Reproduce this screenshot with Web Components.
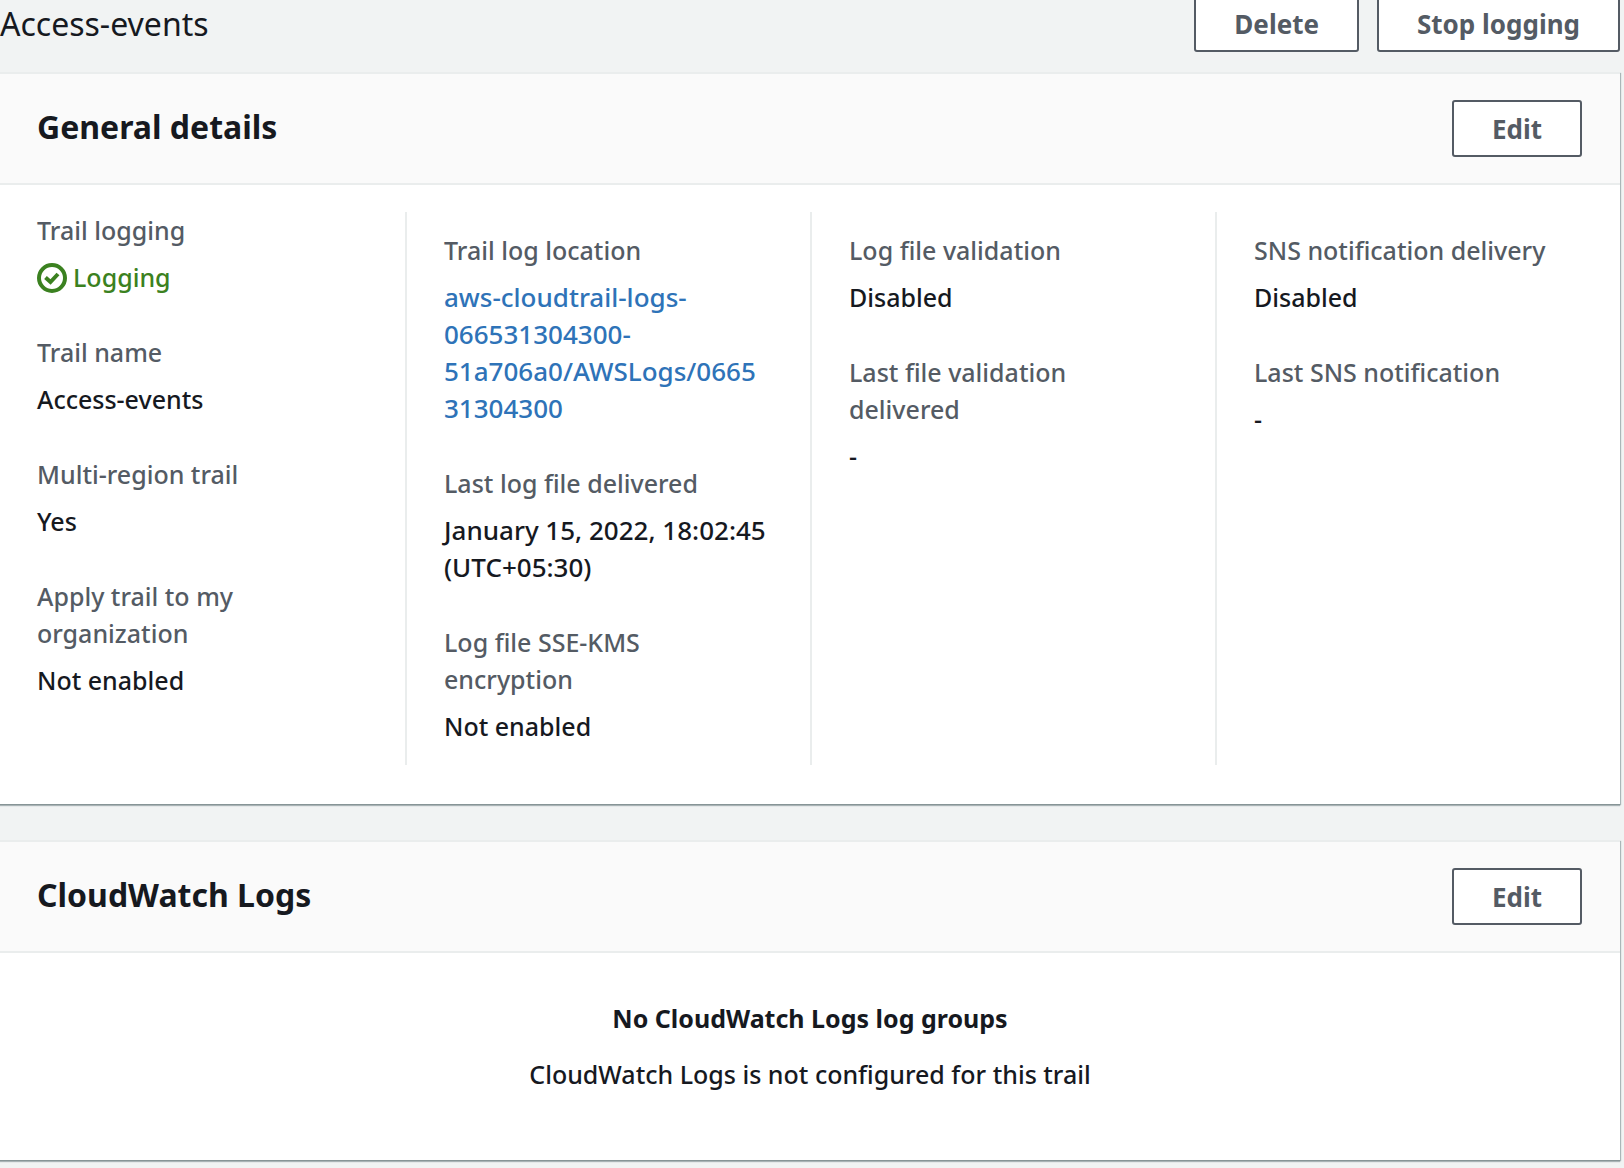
<!DOCTYPE html>
<html lang="en">
<head>
<meta charset="utf-8">
<meta name="viewport" content="width=device-width, initial-scale=1">
<title>Access-events</title>
<style>
  html { background: #f1f3f3; }
  body {
    margin: 0;
    font-family: "Noto Sans", "Open Sans", sans-serif;
    font-size: 25px;
    font-weight: 500;
    line-height: 37px;
    color: #16191f;
    --muted: #545b64;
    --link: #2e73b8;
    --ok: #3b8120;
    --rule: #eaeded;
    --text-long: 26px;
  }
</style>
</head>
<body>
<trail-page>
  <page-bar slot="bar" heading="Access-events">
    <action-button>Delete</action-button>
    <action-button>Stop logging</action-button>
  </page-bar>

  <detail-card heading="General details">
    <action-button slot="actions">Edit</action-button>
    <detail-columns>
      <detail-column lead>
        <key-value label="Trail logging"><status-ok>Logging</status-ok></key-value>
        <key-value label="Trail name">Access-events</key-value>
        <key-value label="Multi-region trail">Yes</key-value>
        <key-value label="Apply trail to my organization">Not enabled</key-value>
      </detail-column>
      <detail-column>
        <key-value label="Trail log location" long><text-link href="#log-location">aws-cloudtrail-logs-066531304300-51a706a0/AWSLogs/066531304300</text-link></key-value>
        <key-value label="Last log file delivered" long>January 15, 2022, 18:02:45 (UTC+05:30)</key-value>
        <key-value label="Log file SSE-KMS encryption">Not enabled</key-value>
      </detail-column>
      <detail-column>
        <key-value label="Log file validation">Disabled</key-value>
        <key-value label="Last file validation delivered">-</key-value>
      </detail-column>
      <detail-column>
        <key-value label="SNS notification delivery">Disabled</key-value>
        <key-value label="Last SNS notification">-</key-value>
      </detail-column>
    </detail-columns>
  </detail-card>

  <detail-card heading="CloudWatch Logs">
    <action-button slot="actions">Edit</action-button>
    <empty-state heading="No CloudWatch Logs log groups">CloudWatch Logs is not configured for this trail</empty-state>
  </detail-card>
</trail-page>

<script>
  class BaseElement extends HTMLElement {
    constructor() {
      super();
      this.attachShadow({ mode: "open" });
    }
    connectedCallback() {
      this.shadowRoot.innerHTML = this.render();
    }
  }

  customElements.define("trail-page", class extends BaseElement {
    render() {
      return `
        <style>
          :host { display: block; }
          main { display: flex; flex-direction: column; gap: 36px; padding: 0 4px 8px 0; }
        </style>
        <slot name="bar"></slot>
        <main><slot></slot></main>`;
    }
  });

  customElements.define("page-bar", class extends BaseElement {
    render() {
      return `
        <style>
          :host { display: block; }
          header {
            box-sizing: border-box; height: 72px; padding: 0 4px 20px 0;
            display: flex; align-items: flex-end; justify-content: space-between;
          }
          h1 { margin: 0; font-size: 32px; line-height: 57px; font-weight: 400; }
          .actions { display: flex; gap: 18px; }
        </style>
        <header>
          <h1>${this.getAttribute("heading")}</h1>
          <div class="actions"><slot></slot></div>
        </header>`;
    }
  });

  customElements.define("action-button", class extends BaseElement {
    render() {
      return `
        <style>
          :host { display: block; }
          button {
            display: block; margin: 0; padding: 9px 38px 7px;
            font: inherit; font-size: 26px; font-weight: 700; color: var(--muted);
            background: #fff; border: 2px solid var(--muted); border-radius: 3px;
            cursor: pointer; white-space: nowrap;
          }
          button:hover { background: #fafafa; color: #16191f; }
        </style>
        <button type="button"><slot></slot></button>`;
    }
  });

  customElements.define("detail-card", class extends BaseElement {
    render() {
      return `
        <style>
          :host { display: block; }
          section {
            background: #fff;
            border-top: 2px solid var(--rule);
            box-shadow: 0 1px 0 #879496, 0 2px 1px #a9b3b5, 1px 1px 1px #aab7b8;
          }
          header {
            display: flex; align-items: center; justify-content: space-between;
            padding: 26px 38px 26px 37px;
            background: #fafafa; border-bottom: 2px solid var(--rule);
          }
          h2 { margin: 0; padding-bottom: 4px; font-size: 32px; line-height: 37px; font-weight: 700; }
        </style>
        <section>
          <header>
            <h2>${this.getAttribute("heading")}</h2>
            <slot name="actions"></slot>
          </header>
          <slot></slot>
        </section>`;
    }
  });

  customElements.define("detail-columns", class extends BaseElement {
    render() {
      return `
        <style>
          :host { display: grid; grid-template-columns: repeat(4, minmax(0, 1fr)); padding: 27px 0 39px; }
        </style>
        <slot></slot>`;
    }
  });

  customElements.define("detail-column", class extends BaseElement {
    render() {
      return `
        <style>
          :host {
            display: flex; flex-direction: column; gap: 38px;
            padding: 20px 43px 20px 37px; border-left: 2px solid var(--rule);
          }
          :host([lead]) { padding-top: 0; border-left: 0; }
        </style>
        <slot></slot>`;
    }
  });

  customElements.define("key-value", class extends BaseElement {
    render() {
      return `
        <style>
          :host { display: block; }
          dl { margin: 0; display: flex; flex-direction: column; gap: 10px; }
          dt { color: var(--muted); }
          dd { margin: 0; overflow-wrap: anywhere; }
          :host([long]) dd { font-size: var(--text-long); }
        </style>
        <dl>
          <dt>${this.getAttribute("label")}</dt>
          <dd><slot></slot></dd>
        </dl>`;
    }
  });

  customElements.define("text-link", class extends BaseElement {
    render() {
      return `
        <style>
          :host { display: inline; }
          a { color: var(--link); text-decoration: none; }
          a:hover { text-decoration: underline; }
        </style>
        <a href="${this.getAttribute("href")}"><slot></slot></a>`;
    }
  });

  customElements.define("status-ok", class extends BaseElement {
    render() {
      return `
        <style>
          :host { display: flex; align-items: center; gap: 6px; color: var(--ok); }
          svg { display: block; flex: none; width: 30px; height: 30px; }
        </style>
        <svg viewBox="0 0 30 30" fill="none" stroke="currentColor" stroke-width="4" aria-hidden="true">
          <circle cx="15" cy="15" r="13"></circle>
          <path d="M8.5 14.5l5 4.5 7.5-8"></path>
        </svg>
        <span><slot></slot></span>`;
    }
  });

  customElements.define("empty-state", class extends BaseElement {
    render() {
      return `
        <style>
          :host {
            display: flex; flex-direction: column; gap: 19px;
            padding: 47px 36px 67px; text-align: center;
          }
          h3, p { margin: 0; font-size: inherit; }
          h3 { font-weight: 700; }
        </style>
        <h3>${this.getAttribute("heading")}</h3>
        <p><slot></slot></p>`;
    }
  });
</script>
</body>
</html>
